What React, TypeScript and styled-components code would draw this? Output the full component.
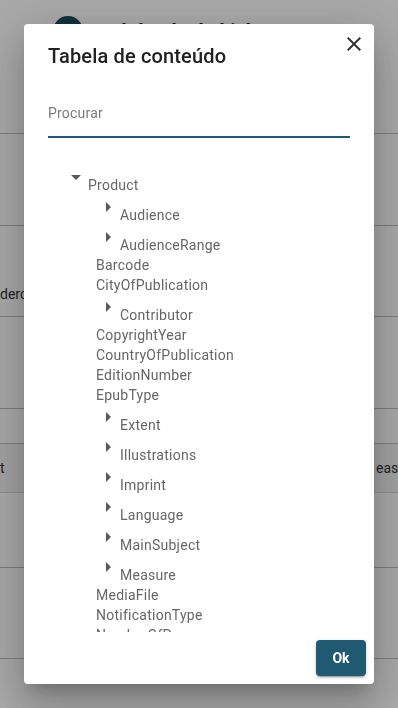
import React from "react";
import styled, { createGlobalStyle } from "styled-components";

const Global = createGlobalStyle`
  html, body { margin: 0; padding: 0; }
  body { font-family: Roboto, "Noto Sans", Arial, sans-serif; background: #fff; overflow: hidden; }
  * { box-sizing: border-box; }
`;

const Page = styled.div`
  width: 398px;
  height: 708px;
  display: flex;
  flex-direction: column;
  background: #fff;
  overflow: hidden;
`;

const Header = styled.div`
  height: 134px;
  border-bottom: 1px solid #bdbdbd;
  display: flex;
  align-items: flex-start;
  gap: 38px;
  padding: 16px 0 0 53px;
`;

const Avatar = styled.div`
  width: 30px;
  height: 30px;
  border-radius: 50%;
  background: #1a4a5e;
  flex: none;
`;

const HeaderTitle = styled.div`
  font-size: 20px;
  line-height: 24px;
  font-weight: 700;
  color: #222;
  margin-top: 3px;
  white-space: nowrap;
`;

const BgRow = styled.div<{ $h: number; $band?: boolean; $bottom?: boolean }>`
  height: ${(p) => p.$h}px;
  flex: none;
  border-bottom: 1px solid ${(p) => (p.$band ? "#d6d6d6" : "#bdbdbd")};
  background: ${(p) => (p.$band ? "#f5f5f5" : "#fff")};
  display: flex;
  align-items: ${(p) => (p.$bottom ? "flex-end" : "center")};
  padding-bottom: ${(p) => (p.$bottom ? 12 : 0)}px;
  font-size: 14px;
  line-height: 20px;
  color: #333;
  white-space: nowrap;
`;

const BgCell = styled.span<{ $w: number; $shift?: number }>`
  width: ${(p) => p.$w}px;
  flex: none;
  padding-left: ${(p) => p.$shift ?? 0}px;
  overflow: visible;
`;

const Backdrop = styled.div`
  position: fixed;
  inset: 0;
  background: rgba(0, 0, 0, 0.34);
  display: flex;
  align-items: center;
  justify-content: center;
`;

const Dialog = styled.div`
  position: relative;
  width: 350px;
  height: 660px;
  background: #fff;
  border-radius: 4px;
  box-shadow: 0px 11px 15px -7px rgba(0, 0, 0, 0.2),
    0px 24px 38px 3px rgba(0, 0, 0, 0.14), 0px 9px 46px 8px rgba(0, 0, 0, 0.12);
  display: flex;
  flex-direction: column;
`;

const Title = styled.h2`
  margin: 0;
  padding: 16px 24px;
  font-size: 20px;
  line-height: 32px;
  font-weight: 500;
  color: #212121;
  letter-spacing: 0.15px;
`;

const CloseButton = styled.button`
  position: absolute;
  top: 8px;
  right: 8px;
  width: 24px;
  height: 24px;
  padding: 0;
  border: none;
  background: transparent;
  color: #333;
  display: flex;
`;

const Content = styled.div`
  flex: 1;
  min-height: 0;
  padding: 0 24px;
  display: flex;
  flex-direction: column;
`;

const Search = styled.input`
  flex: none;
  width: 100%;
  height: 50px;
  border: none;
  border-bottom: 2px solid #1f5a72;
  outline: none;
  padding: 2px 0 0;
  font-family: inherit;
  font-size: 14px;
  letter-spacing: 0.2px;
  color: #333;
  &::placeholder {
    color: #7a7a7a;
  }
`;

const TreeScroll = styled.div`
  flex: 1;
  min-height: 0;
  overflow: hidden;
  padding: 27px 0 0 16px;
`;

const Node = styled.div<{ $indent: number }>`
  display: flex;
  align-items: flex-start;
  padding-left: ${(p) => p.$indent}px;
  color: #666;
  font-size: 14px;
  line-height: 20px;
  white-space: nowrap;
`;

const Caret = styled.svg`
  width: 24px;
  height: 24px;
  flex: none;
  fill: #5a5a5a;
`;

const NodeLabel = styled.span<{ $branch: boolean }>`
  padding-top: ${(p) => (p.$branch ? 10 : 0)}px;
  letter-spacing: 0.25px;
`;

const Actions = styled.div`
  flex: none;
  display: flex;
  justify-content: flex-end;
  padding: 8px;
`;

const OkButton = styled.button`
  height: 36px;
  min-width: 50px;
  padding: 0 14px;
  border: none;
  border-radius: 4px;
  background: #1f5a72;
  color: #fff;
  font-family: inherit;
  font-size: 14px;
  font-weight: 700;
  box-shadow: 0px 3px 1px -2px rgba(0, 0, 0, 0.2), 0px 2px 2px 0px rgba(0, 0, 0, 0.14),
    0px 1px 5px 0px rgba(0, 0, 0, 0.12);
`;

type Item = { label: string; branch: boolean };

const children: Item[] = [
  { label: "Audience", branch: true },
  { label: "AudienceRange", branch: true },
  { label: "Barcode", branch: false },
  { label: "CityOfPublication", branch: false },
  { label: "Contributor", branch: true },
  { label: "CopyrightYear", branch: false },
  { label: "CountryOfPublication", branch: false },
  { label: "EditionNumber", branch: false },
  { label: "EpubType", branch: false },
  { label: "Extent", branch: true },
  { label: "Illustrations", branch: true },
  { label: "Imprint", branch: true },
  { label: "Language", branch: true },
  { label: "MainSubject", branch: true },
  { label: "Measure", branch: true },
  { label: "MediaFile", branch: false },
  { label: "NotificationType", branch: false },
  { label: "NumberOfPages", branch: false },
  { label: "OtherText", branch: true },
];

const ArrowRight = () => (
  <Caret viewBox="0 0 24 24">
    <path d="M10 17l5-5-5-5v10z" />
  </Caret>
);

const ArrowDown = () => (
  <Caret viewBox="0 0 24 24">
    <path d="M7 10l5 5 5-5z" />
  </Caret>
);

export default function App() {
  return (
    <>
      <Global />
      <Page>
        <Header>
          <Avatar />
          <HeaderTitle>Iolanda de Lisboa</HeaderTitle>
        </Header>
        <BgRow $h={92} />
        <BgRow $h={91} $bottom>
          <BgCell $w={24} $shift={0}>dero</BgCell>
        </BgRow>
        <BgRow $h={92} />
        <BgRow $h={35} />
        <BgRow $h={49} $band>
          <BgCell $w={376} $shift={0}>t</BgCell>
          <BgCell $w={22}>easure</BgCell>
        </BgRow>
        <BgRow $h={75} />
        <BgRow $h={91} />
      </Page>
      <Backdrop>
        <Dialog>
          <Title>Tabela de conteúdo</Title>
          <CloseButton aria-label="Fechar">
            <svg width="24" height="24" viewBox="0 0 24 24" fill="currentColor">
              <path d="M19 6.41 17.59 5 12 10.59 6.41 5 5 6.41 10.59 12 5 17.59 6.41 19 12 13.41 17.59 19 19 17.59 13.41 12z" />
            </svg>
          </CloseButton>
          <Content>
            <Search placeholder="Procurar" />
            <TreeScroll>
              <Node $indent={0}>
                <ArrowDown />
                <NodeLabel $branch>Product</NodeLabel>
              </Node>
              {children.map((c) => (
                <Node key={c.label} $indent={32}>
                  {c.branch && <ArrowRight />}
                  <NodeLabel $branch={c.branch}>{c.label}</NodeLabel>
                </Node>
              ))}
            </TreeScroll>
          </Content>
          <Actions>
            <OkButton>Ok</OkButton>
          </Actions>
        </Dialog>
      </Backdrop>
    </>
  );
}
